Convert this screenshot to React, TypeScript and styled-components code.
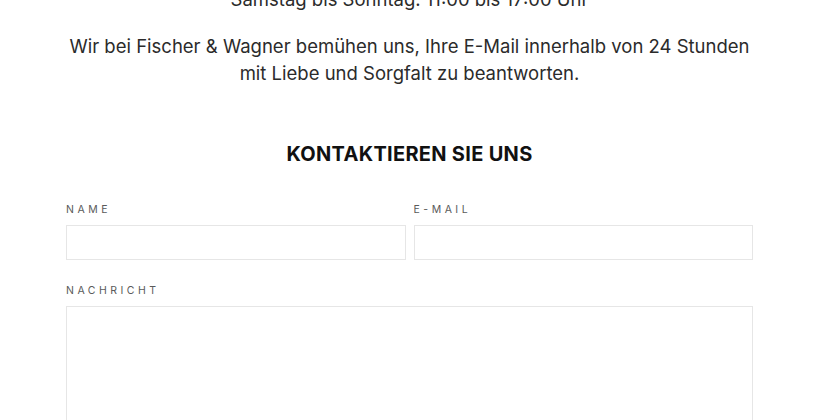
import styled, { createGlobalStyle } from "styled-components";

const GlobalStyle = createGlobalStyle`
  html, body {
    margin: 0;
    padding: 0;
    background: #ffffff;
    overflow: hidden;
  }
  body {
    font-family: Inter, "Noto Sans", sans-serif;
    color: #2b2b2b;
  }
`;

const Page = styled.div`
  width: 687px;
  margin: -14px 0 0 66px;
`;

const Hours = styled.p`
  margin: 0;
  font-size: 18.5px;
  line-height: 27px;
  text-align: center;
`;

const Intro = styled.p`
  margin: 20px 0 0;
  font-size: 18.5px;
  line-height: 27px;
  text-align: center;
`;

const Title = styled.h2`
  margin: 54px 0 0;
  font-size: 20px;
  line-height: 26px;
  font-weight: 700;
  letter-spacing: 0.3px;
  color: #111;
  text-align: center;
`;

const Form = styled.form`
  margin-top: 37px;
  display: flex;
  flex-direction: column;
  gap: 25px;
`;

const Row = styled.div`
  display: grid;
  grid-template-columns: 1fr 1fr;
  gap: 8px;
`;

const Field = styled.label`
  display: flex;
  flex-direction: column;
  gap: 9px;
`;

const Label = styled.span`
  font-size: 10.5px;
  line-height: 12px;
  letter-spacing: 3.5px;
  text-transform: uppercase;
  color: #5a5a5a;
`;

const Input = styled.input`
  box-sizing: border-box;
  height: 35px;
  width: 100%;
  border: 1px solid #e6e6e6;
  background: #fff;
  outline: none;
  font: inherit;
`;

const TextArea = styled.textarea`
  box-sizing: border-box;
  height: 160px;
  width: 100%;
  border: 1px solid #e6e6e6;
  background: #fff;
  resize: none;
  outline: none;
  font: inherit;
`;

export default function App() {
  return (
    <>
      <GlobalStyle />
      <Page>
        <Hours>Samstag bis Sonntag: 11:00 bis 17:00 Uhr</Hours>
        <Intro>
          Wir bei Fischer &amp; Wagner bemühen uns, Ihre E-Mail innerhalb von 24 Stunden
          <br />
          mit Liebe und Sorgfalt zu beantworten.
        </Intro>
        <Title>KONTAKTIEREN SIE UNS</Title>
        <Form>
          <Row>
            <Field>
              <Label>Name</Label>
              <Input type="text" />
            </Field>
            <Field>
              <Label>E-Mail</Label>
              <Input type="email" />
            </Field>
          </Row>
          <Field>
            <Label>Nachricht</Label>
            <TextArea />
          </Field>
        </Form>
      </Page>
    </>
  );
}
